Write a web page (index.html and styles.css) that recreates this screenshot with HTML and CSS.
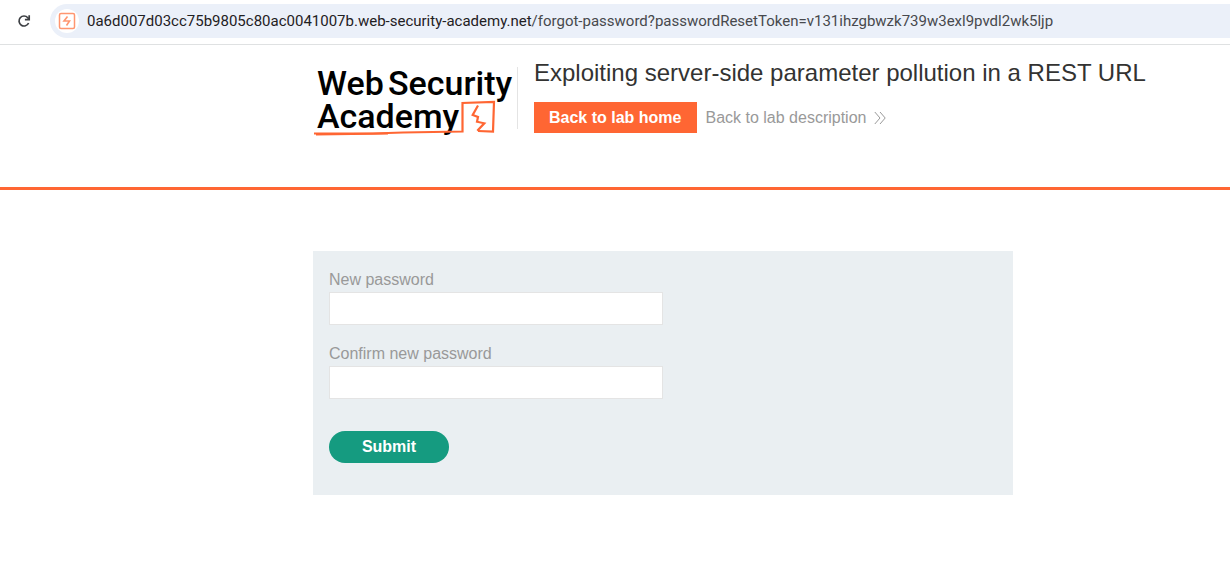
FILE: index.html
```
<!DOCTYPE html>
<html lang="en">
<head>
<meta charset="utf-8">
<title>Exploiting server-side parameter pollution in a REST URL</title>
<link rel="stylesheet" href="styles.css">
</head>
<body>
<div class="toolbar">
  <button class="reload" type="button" aria-label="Reload">
    <svg width="16" height="16" viewBox="0 0 16 16" fill="none" stroke="#3c3f43" stroke-width="1.7"><path d="M12.6 10a5 5 0 1 1-.8-5.3l1.2 1.6"/><path d="M13.2 2.3v4.3H8.900"/></svg>
  </button>
  <div class="address">
    <span class="site-icon">
      <svg width="18" height="18" viewBox="0 0 18 18" fill="none" stroke="#ff9670" stroke-width="1.5"><rect x="1.500" y="1.500" width="15" height="15" rx="1.500"/><path d="M9.500 4.500 6 9H11.500L8.500 13.500" stroke-width="1.600"/></svg>
    </span>
    <div class="url"><span class="host">0a6d007d03cc75b9805c80ac0041007b.web-security-academy.net</span>/forgot-password?passwordResetToken=v131ihzgbwzk739w3exl9pvdl2wk5ljp</div>
  </div>
</div>
<header class="lab-header">
  <div class="lab-inner">
    <svg class="logo" width="204" height="80" viewBox="0 0 204 80" role="img" aria-label="Web Security Academy">
      <g class="logo-text"><text x="4" y="36">Web</text><text x="75" y="36">Security</text><text x="4" y="69">Academy</text></g>
      <g fill="none" stroke="#ff6633" stroke-width="2.200"><path d="M1 74.500H60L90 73.500 149.500 72.500V44L181 43 180 72.500 165 72"/><path d="M3 75.500 75 74.500"/><path d="M165 46.500 159.700 56 165 58 164 62.700 171.300 64.300 164.300 71.700" stroke-width="2.200"/></g>
    </svg>
    <div class="lab-info">
      <h1>Exploiting server-side parameter pollution in a REST URL</h1>
      <div class="links">
        <a class="home" href="#">Back to lab home</a>
        <a class="description" href="#">Back to lab description
          <svg width="12" height="12" viewBox="0 0 12 12" fill="none" stroke="#999" stroke-width="1"><path d="M.8 0 6 6 .8 12M6 0l5.200 6L6 12"/></svg>
        </a>
      </div>
    </div>
  </div>
</header>
<main>
  <form class="panel">
    <label for="new-password">New password</label>
    <input id="new-password" type="password">
    <label for="confirm-password">Confirm new password</label>
    <input id="confirm-password" type="password">
    <button class="submit" type="submit">Submit</button>
  </form>
</main>
</body>
</html>
```
FILE: styles.css
```
* { box-sizing: border-box; }
body {
  margin: 0;
  background: #fff;
  color: #333332;
  font: 16px/20px "Liberation Sans", Arial, sans-serif;
}
.toolbar {
  display: flex;
  align-items: center;
  height: 45px;
  padding: 0 0 3px 16px;
  border-bottom: 1px solid #dfe1e2;
}
.reload {
  display: flex;
  margin-right: 18px;
  padding: 0;
  border: 0;
  background: none;
}
.address {
  flex: 1;
  min-width: 0;
  display: flex;
  align-items: center;
  gap: 8px;
  height: 34px;
  padding-left: 5px;
  border-radius: 17px 0 0 17px;
  background: #ebf0f9;
}
.site-icon {
  display: flex;
  flex: none;
  padding: 3px;
  border-radius: 50%;
  background: #fff;
}
.url {
  color: #47494d;
  font: 15px/20px Roboto, "Noto Sans", sans-serif;
  white-space: nowrap;
}
.host { color: #1f2023; }
.lab-header {
  padding-top: 14px;
  border-bottom: 3px solid #ff6633;
}
.lab-inner {
  display: flex;
  min-height: 128px;
  margin-left: 313px;
}
.logo { flex: none; }
.logo-text {
  fill: #000;
  font: 500 34px Roboto, sans-serif;
}
.lab-info {
  position: relative;
  padding-left: 17px;
}
.lab-info::before {
  content: "";
  position: absolute;
  left: 0;
  top: 8px;
  width: 1px;
  height: 62px;
  background: #e4e4e4;
}
h1 {
  margin: 0 0 15px;
  font-size: 24px;
  font-weight: 400;
  line-height: 28px;
}
.links { display: flex; align-items: center; gap: 8px; }
.home {
  padding: 6px 16px 5px 15px;
  background: #ff6633;
  color: #fff;
  font-weight: 700;
  text-decoration: none;
}
.description {
  display: flex;
  align-items: center;
  gap: 8px;
  color: #999;
  text-decoration: none;
}
main { padding: 61px 0 80px 313px; }
.panel {
  display: flex;
  flex-direction: column;
  align-items: flex-start;
  max-width: 700px;
  padding: 19px 16px 32px;
  background: #eaeff2;
  color: #999;
}
.panel label { margin-bottom: 2px; }
.panel input {
  width: 50%;
  height: 33px;
  margin-bottom: 19px;
  padding: 0 8px;
  border: 1px solid #e4e4e4;
  background: #fff;
  font: inherit;
}
.submit {
  width: 120px;
  height: 32px;
  margin-top: 13px;
  border: 0;
  border-radius: 16px;
  background: #159b80;
  color: #fff;
  font: 700 16px/20px "Liberation Sans", Arial, sans-serif;
}
```
